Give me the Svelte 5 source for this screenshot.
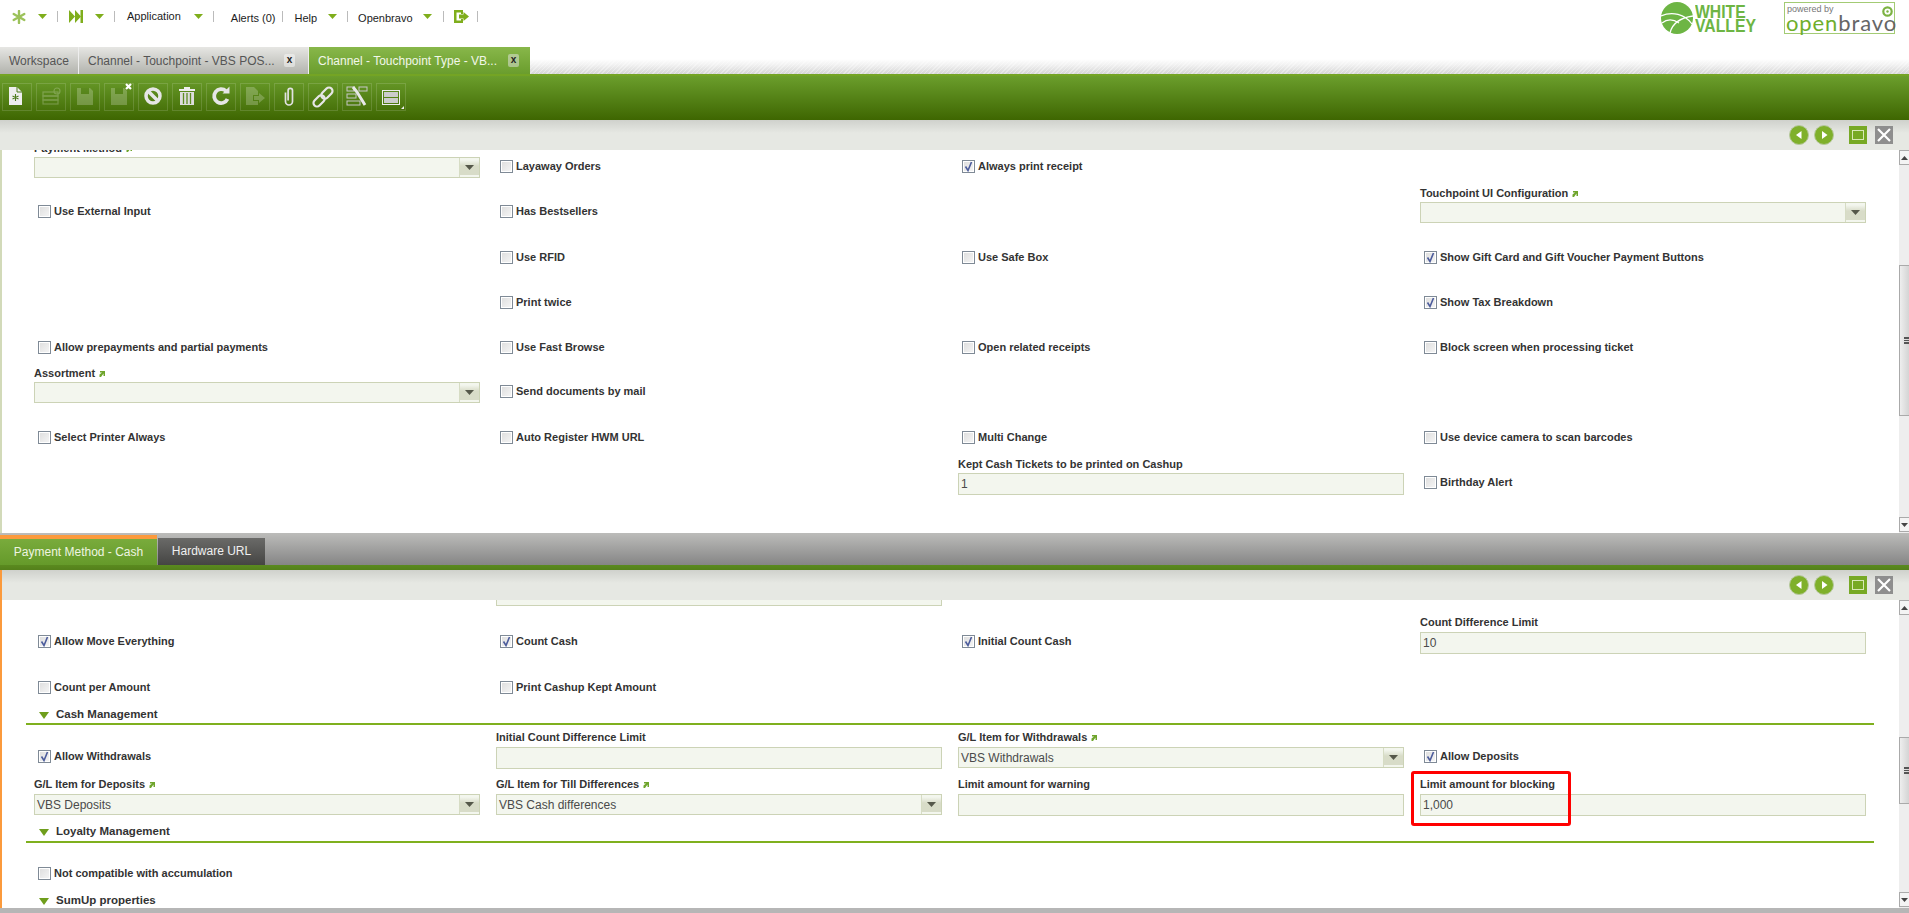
<script>
  const c = (label, on = false) => ({ t: 'c', label, on });
  const s = (label, value = '', link = true) => ({ t: 's', label, value, link });
  const i = (label, value = '', mark = false) => ({ t: 'i', label, value, mark });
  const n = { t: 'n' };

  const topRows = [
    { cells: [s('Payment Method'), c('Layaway Orders'), c('Always print receipt', true), n] },
    { cls: 'r46', cells: [c('Use External Input'), c('Has Bestsellers'), n, s('Touchpoint UI Configuration')] },
    { cells: [n, c('Use RFID'), c('Use Safe Box'), c('Show Gift Card and Gift Voucher Payment Buttons', true)] },
    { cells: [n, c('Print twice'), n, c('Show Tax Breakdown', true)] },
    { cls: 'r44', cells: [c('Allow prepayments and partial payments'), c('Use Fast Browse'), c('Open related receipts'), c('Block screen when processing ticket')] },
    { cls: 'r46', cells: [s('Assortment'), c('Send documents by mail'), n, n] },
    { cells: [c('Select Printer Always'), c('Auto Register HWM URL'), c('Multi Change'), c('Use device camera to scan barcodes')] },
    { cells: [n, n, i('Kept Cash Tickets to be printed on Cashup', '1'), c('Birthday Alert')] }
  ];

  const bottomRows = [
    { cls: 'r48', cells: [n, i('', ''), n, n] },
    { cls: 'r46', cells: [c('Allow Move Everything', true), c('Count Cash', true), c('Initial Count Cash', true), i('Count Difference Limit', '10')] },
    { cls: 'r44', cells: [c('Count per Amount'), c('Print Cashup Kept Amount'), n, n] },
    { section: 'Cash Management', cls: 'tight' },
    { cls: 'r47', cells: [c('Allow Withdrawals', true), i('Initial Count Difference Limit'), s('G/L Item for Withdrawals', 'VBS Withdrawals'), c('Allow Deposits', true)] },
    { cells: [s('G/L Item for Deposits', 'VBS Deposits'), s('G/L Item for Till Differences', 'VBS Cash differences'), i('Limit amount for warning'), i('Limit amount for blocking', '1,000', true)] },
    { section: 'Loyalty Management' },
    { cls: 'r44', cells: [c('Not compatible with accumulation'), n, n, n] },
    { section: 'SumUp properties' }
  ];
  const tools = ['new', 'form', 'save', 'saveclose', 'undo', 'trash', 'refresh', 'export', 'clip', 'link', 'tools', 'layout'];
  const disabled = ['form', 'save', 'saveclose', 'export'];
</script>

{#snippet tri()}
  <svg class="tri" width="9" height="5" viewBox="0 0 9 5"><path d="M0 0h9L4.500 5z" /></svg>
{/snippet}

{#snippet panelHead()}
  <div class="head">
    <svg class="round" width="20" height="20" viewBox="0 0 20 20"><circle cx="10" cy="10" r="9.500" /><path d="M12.500 6v8L7 10z" fill="#fff" /></svg>
    <svg class="round" width="20" height="20" viewBox="0 0 20 20"><circle cx="10" cy="10" r="9.500" /><path d="M8 6v8l5.500-4z" fill="#fff" /></svg>
    <div class="maxi"><span></span></div>
    <svg class="closex" width="18" height="18" viewBox="0 0 18 18"><rect width="18" height="18" fill="#8e8e8e" /><path d="M3 3l12 12M15 3L3 15" stroke="#fff" stroke-width="2.200" /></svg>
  </div>
{/snippet}

{#snippet scrollbar(cls)}
  <div class="sb {cls}">
    <div class="arrow"><svg width="7" height="4" viewBox="0 0 7 4"><path d="M0 4h7L3.500 0z" fill="#444" /></svg></div>
    <div class="thumb"><i></i><i></i><i></i></div>
    <div class="arrow end"><svg width="7" height="4" viewBox="0 0 7 4"><path d="M0 0h7L3.500 4z" fill="#444" /></svg></div>
  </div>
{/snippet}

{#snippet rows(list)}
  {#each list as row}
    {#if row.section}
      <div class="section {row.cls ?? ''}">
        <svg width="10" height="7" viewBox="0 0 10 7"><path d="M0 0h10L5 7z" fill="#6f9e1c" /></svg>
        <span>{row.section}</span>
      </div>
    {:else}
      <div class="row {row.cls ?? ''}">
        {#each row.cells as cell}
          <div class="cell">
            {#if cell.t === 'c'}
              <div class="check">
                <span class="box">
                  {#if cell.on}
                    <svg width="11" height="11" viewBox="0 0 11 11"><path d="M2.500 5.500l2.500 4 3.500-8.500" fill="none" stroke="#4c5c9c" stroke-width="1.600" /></svg>
                  {/if}
                </span>
                <span>{cell.label}</span>
              </div>
            {:else if cell.t === 's' || cell.t === 'i'}
              <div class="lbl">
                {cell.label}
                {#if cell.link}
                  <svg class="lnk" width="6" height="7" viewBox="0 0 6 7"><path d="M1 1h5v5H4.500V3.500L2 7H.500V4.500L3 2.500H1z" fill="#6fa52c" /></svg>
                {/if}
              </div>
              <div class="input" class:sel={cell.t === 's'}>
                <span class="val">{cell.value}</span>
                {#if cell.t === 's'}
                  <span class="pick"><svg width="9" height="5" viewBox="0 0 9 5"><path d="M0 0h9L4.500 5z" fill="#55584a" /></svg></span>
                {/if}
              </div>
              {#if cell.mark}<div class="redmark"></div>{/if}
            {/if}
          </div>
        {/each}
      </div>
    {/if}
  {/each}
{/snippet}

<div class="page">
  <header class="nav">
    <div class="menu">
      <svg class="ic" width="14" height="14" viewBox="0 0 14 14"><g stroke="#9cc25a" stroke-width="2.400" stroke-linecap="round"><path d="M7 6V1M7 8v5M6 6.500L1.700 4M8 6.500L12.300 4M6 7.500L1.700 10M8 7.500l4.300 2.500" /></g></svg>
      <span class="m12">{@render tri()}</span>
      <i class="sep m10"></i>
      <svg class="ic m11" width="14" height="13" viewBox="0 0 14 13"><path d="M0 0l6 6.500L0 13zM6 0l6 6.500L6 13z" fill="#7fae1c" /><rect x="11.500" width="2.500" height="13" fill="#7fae1c" /></svg>
      <span class="m12">{@render tri()}</span>
      <i class="sep m10"></i>
      <span class="txt m12 high">Application</span>
      <span class="m13">{@render tri()}</span>
      <i class="sep m10"></i>
      <span class="txt m17 low">Alerts (0)</span>
      <i class="sep m7"></i>
      <span class="txt m11 low">Help</span>
      <span class="m11">{@render tri()}</span>
      <i class="sep m10"></i>
      <span class="txt m10 low">Openbravo</span>
      <span class="m10">{@render tri()}</span>
      <i class="sep m11"></i>
      <svg class="ic m10" width="15" height="13" viewBox="0 0 15 13"><path d="M0 0h9v4H7V2.500H2.500v8H7V9h2v4H0z" fill="#7fae1c" /><path d="M5 4.500h4.500V2L15 6.500 9.500 11V8.500H5z" fill="#7fae1c" /></svg>
      <i class="sep m8"></i>
    </div>
    <div class="logos">
      <div class="wv">
        <svg width="32" height="32" viewBox="0 0 32 32"><circle cx="16" cy="16" r="16" fill="#6db544" /><path d="M0 14c11-5 24-2 31 8M9 31c2-9 9-15 23-17M1 21c5-4 11-4 17 0" fill="none" stroke="#fff" stroke-width="1.300" /></svg>
        <div class="wvtxt"><span>WHITE</span><span>VALLEY</span></div>
      </div>
      <div class="powered">
        <span class="pb">powered by</span>
        <span class="ob"><b>open</b>bravo</span>
        <svg class="swirl" width="11" height="11" viewBox="0 0 11 11"><circle cx="5.500" cy="5.500" r="4.200" fill="none" stroke="#7cb342" stroke-width="2.200" /><circle cx="5.500" cy="5.500" r="1.200" fill="#7cb342" /></svg>
      </div>
    </div>
  </header>

  <nav class="tabs">
    <div class="tab t1">Workspace</div>
    <div class="tab t2"><span>Channel - Touchpoint - VBS POS...</span><em>x</em></div>
    <div class="tab t3"><span>Channel - Touchpoint Type - VB...</span><em>x</em></div>
  </nav>

  <div class="toolbar">
    {#each tools as tool}
      <div class="tool" class:off={disabled.includes(tool)}>
        <svg width="30" height="28" viewBox="0 0 30 28">
          {#if tool === 'new'}
            <path d="M7 4h8l5 5v13H7z" fill="#eee" /><path d="M15 4v5h5" fill="none" stroke="#4c7a1a" /><path d="M13.500 11v7M10.500 13l6 3M16.500 13l-6 3" stroke="#4c7a1a" stroke-width="1.100" />
          {:else if tool === 'form'}
            <g fill="none" stroke="#fff" stroke-width="1.200"><rect x="7" y="9" width="15" height="4" /><rect x="7" y="13" width="15" height="4" /><rect x="7" y="17" width="15" height="4" /><circle cx="21" cy="8" r="3" /></g>
          {:else if tool === 'save' || tool === 'saveclose'}
            <path d="M7 5h13l3 3v14H7z" fill="#fff" /><rect x="11" y="5" width="8" height="6" fill="#527f1d" />
          {:else if tool === 'undo'}
            <circle cx="15" cy="13" r="7" fill="none" stroke="#e6e6e6" stroke-width="3.500" /><path d="M10 8l10 10" stroke="#e6e6e6" stroke-width="3.500" />
          {:else if tool === 'trash'}
            <path d="M7 6h16v2H7zM12 4h6v2h-6z" fill="#eee" /><path d="M8 9h14v13H8z" fill="#ddd" /><path d="M11.500 10v11M15 10v11M18.500 10v11" stroke="#5d8c22" stroke-width="1.300" />
          {:else if tool === 'refresh'}
            <path d="M21.500 16a7 7 0 1 1-1.500-8" fill="none" stroke="#e6e6e6" stroke-width="3.800" /><path d="M16.500 10.500h7v-7z" fill="#e6e6e6" />
          {:else if tool === 'export'}
            <path d="M6 4h8l4 4v4h-5v6h5v4H6z" fill="#fff" /><path d="M14 13h5v-3l6 5-6 5v-3h-5z" fill="#fff" />
          {:else if tool === 'clip'}
            <path d="M12 9v9a3.500 3.500 0 0 0 7 0V7a2.200 2.200 0 0 0-4.400 0v10" fill="none" stroke="#e2e2e2" stroke-width="1.700" transform="translate(-.5 .5)" />
          {:else if tool === 'link'}
            <g fill="none" stroke="#e6e6e6" stroke-width="2.200" transform="rotate(-45 15 14)"><rect x="3" y="10.500" width="13" height="7" rx="3.500" /><rect x="14" y="10.500" width="13" height="7" rx="3.500" /></g>
          {:else if tool === 'tools'}
            <g fill="none" stroke="#c8c8c8" stroke-width="1"><rect x="5" y="4" width="7" height="4" /><rect x="17" y="4" width="8" height="4" /><rect x="5" y="11" width="9" height="4" /><rect x="5" y="18" width="13" height="4" /></g><path d="M11 4l4 5 8 13" fill="none" stroke="#e8e8e8" stroke-width="3" />
          {:else}
            <rect x="6.500" y="7.500" width="17" height="14" fill="none" stroke="#eee" /><rect x="8" y="9" width="14" height="5" fill="#ccc" /><rect x="8" y="15" width="14" height="5" fill="#ccc" /><path d="M28 26v-3l-3 3z" fill="#eee" />
          {/if}
        </svg>
        {#if tool === 'saveclose'}
          <svg class="badge" width="7" height="7" viewBox="0 0 7 7"><path d="M1 1l5 5M6 1L1 6" stroke="#fff" stroke-width="2.200" /></svg>
        {/if}
      </div>
    {/each}
  </div>

  {@render panelHead()}
  <section class="pane top">
    <div class="form">{@render rows(topRows)}</div>
    {@render scrollbar('s1')}
  </section>

  <div class="subbar">
    <div class="st on">Payment Method - Cash</div>
    <div class="st">Hardware URL</div>
  </div>

  <div class="lower">
    {@render panelHead()}
    <section class="pane bottom">
      <div class="form">{@render rows(bottomRows)}</div>
      {@render scrollbar('s2')}
    </section>
  </div>
  <div class="foot"></div>
</div>

<style>
  :global(body) { margin: 0; background: #fff; }
  .page { width: 1909px; height: 913px; overflow: hidden; display: flex; flex-direction: column; font-family: "Liberation Sans", Arial, sans-serif; color: #333; }

  .nav { height: 47px; flex: none; display: flex; justify-content: space-between; }
  .menu { height: 33px; display: flex; align-items: center; padding-left: 12px; }
  .menu span, .menu svg { display: block; }
  .tri { fill: #7fae1c; }
  .sep { width: 1px; height: 11px; background: #bbb; display: block; }
  .txt { font-size: 11px; color: #1c1c1c; }
  .low { position: relative; top: 1px; }
  .high { position: relative; top: -1px; }
  .m7 { margin-left: 7px; } .m8 { margin-left: 8px; } .m10 { margin-left: 10px; } .m11 { margin-left: 11px; }
  .m12 { margin-left: 12px; } .m13 { margin-left: 13px; } .m17 { margin-left: 17px; }
  .logos { display: flex; padding: 2px 14px 0 0; }
  .wv { display: flex; gap: 2px; width: 123px; height: 32px; }
  .wvtxt { display: flex; flex-direction: column; font-weight: bold; font-size: 17.500px; line-height: 14px; color: #6db544; transform: scaleX(.9); transform-origin: left; padding-top: 3px; }
  .powered { position: relative; width: 109px; height: 30px; border: 1px solid #a3cb74; }
  .pb { position: absolute; left: 2px; top: 1px; font-size: 9px; color: #777; line-height: 10px; }
  .ob { position: absolute; left: 1px; top: 11px; font-family: Lato, sans-serif; font-weight: 400; font-size: 22px; line-height: 18px; color: #666; letter-spacing: .9px; }
  .ob b { font-weight: 400; color: #6fae2c; }
  .swirl { position: absolute; right: 1px; top: 3px; }

  .tabs { height: 27px; flex: none; display: flex; background: repeating-linear-gradient(135deg, rgba(255,255,255,.35) 0 1px, transparent 1px 3px), linear-gradient(#fff 12px, #f1f1f1 18px, #d5d5d5 27px); }
  .tab { height: 27px; box-sizing: border-box; display: flex; align-items: center; font-size: 12px; line-height: 26px; }
  .t1, .t2 { background: linear-gradient(#e6e6e3, #b2b3ad); color: #555; border-right: 1px solid #eee; }
  .t1 { width: 79px; padding-left: 9px; }
  .t2 { width: 230px; padding-left: 9px; justify-content: space-between; padding-right: 13px; }
  .t3 { width: 221px; padding-left: 9px; padding-right: 11px; justify-content: space-between; background: linear-gradient(#88b74a, #6a9d2d); color: #f2f7e9; }
  .tab em { font-style: normal; font-size: 10px; font-weight: bold; width: 11px; height: 13px; line-height: 12px; text-align: center; border-radius: 2px; background: rgba(255,255,255,.45); color: #222; }
  .t3 em { background: rgba(230,230,230,.5); }

  .toolbar { height: 46px; flex: none; box-sizing: border-box; border-top: 2px solid #74a424; background: linear-gradient(#6b9e2c, #3e6601); display: flex; gap: 4px; padding: 7px 0 0 2px; }
  .tool { position: relative; width: 30px; height: 28px; box-sizing: border-box; box-shadow: inset 0 0 0 1px rgba(255,255,255,.14); }
  .tool svg { display: block; }
  .tool.off > svg:first-child { opacity: .22; }
  .badge { position: absolute; right: 2px; top: 0; }

  .head { height: 30px; flex: none; box-sizing: border-box; display: flex; align-items: flex-start; justify-content: flex-end; padding: 5px 16px 0 0; background: linear-gradient(#cfd1cc, rgba(230,232,227,0) 13px) no-repeat, #e6e8e3; }
  .round { display: block; margin-right: 5px; }
  .round circle { fill: #7fb02b; stroke: #b6c89c; stroke-width: 1; }
  .maxi { width: 18px; height: 18px; margin: 1px 0 0 10px; background: #77a925; display: flex; align-items: center; justify-content: center; }
  .maxi span { width: 10px; height: 8px; border: 1px solid #d8e8b8; }
  .closex { margin: 1px 0 0 8px; display: block; }

  .pane { flex: none; display: flex; overflow: hidden; box-sizing: border-box; background: #fff; }
  .top { height: 383px; border-left: 2px solid #d2dab9; }
  .bottom { height: 308px; }
  .form { flex: 1; min-width: 0; padding-left: 32px; }
  .top .form { margin-top: -10px; }
  .bottom .form { margin-top: -33px; }

  .row { display: grid; grid-template-columns: repeat(4, 462px); height: 45px; }
  .r44 { height: 44px; }
  .r46 { height: 46px; }
  .r47 { height: 47px; }
  .r48 { height: 48px; }
  .cell { position: relative; }
  .check { display: flex; align-items: center; gap: 3px; padding: 19px 0 0 4px; font-size: 11px; font-weight: bold; line-height: 14px; }
  .box { width: 11px; height: 11px; border: 1px solid #7f8a96; box-shadow: inset 0 0 0 1px #fff; background: linear-gradient(135deg, #ddd, #f6f6f6); display: block; flex: none; }
  .box svg { display: block; }
  .lbl { height: 17px; line-height: 16px; font-size: 11px; font-weight: bold; white-space: nowrap; }
  .bottom .lbl { line-height: 14px; }
  .lnk { margin-left: 1px; }
  .input { width: 446px; height: 22px; box-sizing: border-box; border: 1px solid #ccd3b6; background: #f3f6ee; display: flex; align-items: center; justify-content: space-between; font-size: 12px; color: #4a4a4a; }
  .input.sel { height: 21px; }
  .val { padding-left: 2px; }
  .pick { width: 20px; height: 19px; box-sizing: border-box; border-left: 1px solid #d6dcc4; display: flex; align-items: center; justify-content: center; background: linear-gradient(#f3f6ee 2px, #d8dcc8 8px, #d8dcc8 17px, #f3f6ee 17px); }
  .redmark { position: absolute; left: -9px; top: -6px; width: 160px; height: 55px; box-sizing: border-box; border: 3px solid #f00; border-radius: 3px; }

  .section { height: 21px; margin: 0 0 4px -8px; width: 1848px; box-sizing: border-box; border-bottom: 2px solid #7fb01e; display: flex; align-items: center; gap: 7px; padding-left: 13px; font-size: 11.500px; font-weight: bold; line-height: 17px; }
  .section.tight { height: 20px; margin-bottom: 5px; }
  .section svg { display: block; margin-top: 2px; }

  .sb { width: 10px; flex: none; background: #eee; display: flex; flex-direction: column; }
  .arrow { height: 15px; box-sizing: border-box; border: 1px solid #aaa; border-right: none; background: #f4f4f4; display: flex; align-items: center; justify-content: center; flex: none; }
  .arrow.end { margin-top: auto; margin-bottom: 1px; }
  .thumb { box-sizing: border-box; border: 1px solid #aaa; border-right: none; background: linear-gradient(90deg, #eee, #d4d4d4); display: flex; flex-direction: column; justify-content: center; align-items: flex-end; gap: 1px; flex: none; }
  .thumb i { display: block; width: 5px; height: 1.500px; background: #555; }
  .s1 .thumb { margin-top: 100px; height: 151px; }
  .s2 .thumb { margin-top: 122px; height: 67px; }

  .subbar { height: 37px; flex: none; box-sizing: border-box; display: flex; align-items: flex-end; gap: 1px; padding-bottom: 5px; background: linear-gradient(#bcbcba, #858585 32px, #5a8a1f 32px, #54801b); }
  .st { width: 107px; height: 27px; line-height: 27px; text-align: center; font-size: 12px; color: #f0f0f0; background: linear-gradient(#6a6a68, #454543); }
  .st.on { width: 157px; height: 26px; line-height: 26px; box-sizing: content-box; border-top: 4px solid #fb9a3c; color: #eef5e0; background: linear-gradient(#79ab3c, #659a2a); }

  .lower { border-left: 2px solid #fb9a3c; display: flex; flex-direction: column; flex: none; }
  .foot { height: 5px; flex: none; background: #b6b6b6; }
</style>
